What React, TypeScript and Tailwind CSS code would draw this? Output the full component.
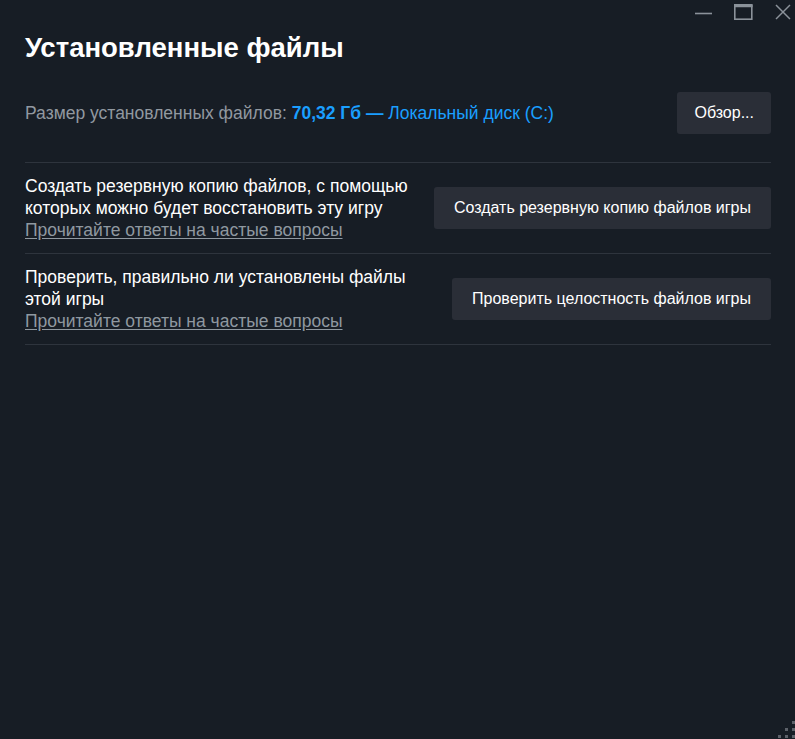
import { ReactNode } from 'react'

type RowProps = {
  text: string
  button: string
}

function ActionRow({ text, button }: RowProps) {
  return (
    <div className="flex items-center justify-between border-b border-[#2e343d] py-3">
      <div className="max-w-[400px] text-[17.5px] leading-[22px] text-white">
        <div>{text}</div>
        <a href="#" className="text-[#8f98a0] underline underline-offset-2 decoration-[#8f98a0]">
          Прочитайте ответы на частые вопросы
        </a>
      </div>
      <button className="h-[42px] shrink-0 rounded-[3px] bg-[#2a2e37] px-[20px] text-[16px] text-white">
        {button}
      </button>
    </div>
  )
}

function WindowControls({ children }: { children?: ReactNode }) {
  return (
    <div className="absolute right-0 top-0 flex">
      <svg width="120" height="24" viewBox="0 0 120 24" className="text-[#8b929a]">
        <line x1="20" y1="13.5" x2="37" y2="13.5" stroke="currentColor" strokeWidth="1.6" />
        <rect x="59.8" y="4.8" width="17" height="14.4" fill="none" stroke="currentColor" strokeWidth="1.6" />
        <line x1="59" y1="6" x2="77.6" y2="6" stroke="currentColor" strokeWidth="2.5" />
        <line x1="101" y1="5" x2="115" y2="19" stroke="currentColor" strokeWidth="1.5" />
        <line x1="115" y1="5" x2="101" y2="19" stroke="currentColor" strokeWidth="1.5" />
      </svg>
      {children}
    </div>
  )
}

export default function App() {
  return (
    <div
      className="relative min-h-[739px] w-full overflow-hidden bg-[#171d25]"
      style={{ fontFamily: '"Liberation Sans", Arial, sans-serif' }}
    >
      <WindowControls />

      <div className="px-[25px] pt-[33px] pr-[24px]">
        <h1 className="text-[27.5px] font-bold leading-[30px] text-white">Установленные файлы</h1>

        <div className="mt-[29px] flex items-center justify-between border-b border-[#2e343d] pb-[28px]">
          <div className="text-[17.5px] leading-[22px]">
            <span className="text-[#9198a0]">Размер установленных файлов: </span>
            <span className="font-bold text-[#1a9fff]">70,32 Гб — </span>
            <span className="text-[#1a9fff]">Локальный диск (C:)</span>
          </div>
          <button className="h-[42px] rounded-[3px] bg-[#2a2e37] px-[17px] text-[16px] text-white">Обзор...</button>
        </div>

        <ActionRow
          text="Создать резервную копию файлов, с помощью которых можно будет восстановить эту игру"
          button="Создать резервную копию файлов игры"
        />
        <ActionRow
          text="Проверить, правильно ли установлены файлы этой игры"
          button="Проверить целостность файлов игры"
        />
      </div>

      {/* resize grip */}
      <svg width="18" height="18" viewBox="0 0 18 18" className="absolute bottom-0 right-0">
        <rect x="15" y="0" width="3" height="3" fill="#5c6169" />
        <rect x="8" y="7" width="3" height="3" fill="#5c6169" />
        <rect x="15" y="7" width="3" height="3" fill="#5c6169" />
        <rect x="1" y="14" width="3" height="3" fill="#5c6169" />
        <rect x="8" y="14" width="3" height="3" fill="#5c6169" />
        <rect x="15" y="14" width="3" height="3" fill="#5c6169" />
      </svg>
    </div>
  )
}
